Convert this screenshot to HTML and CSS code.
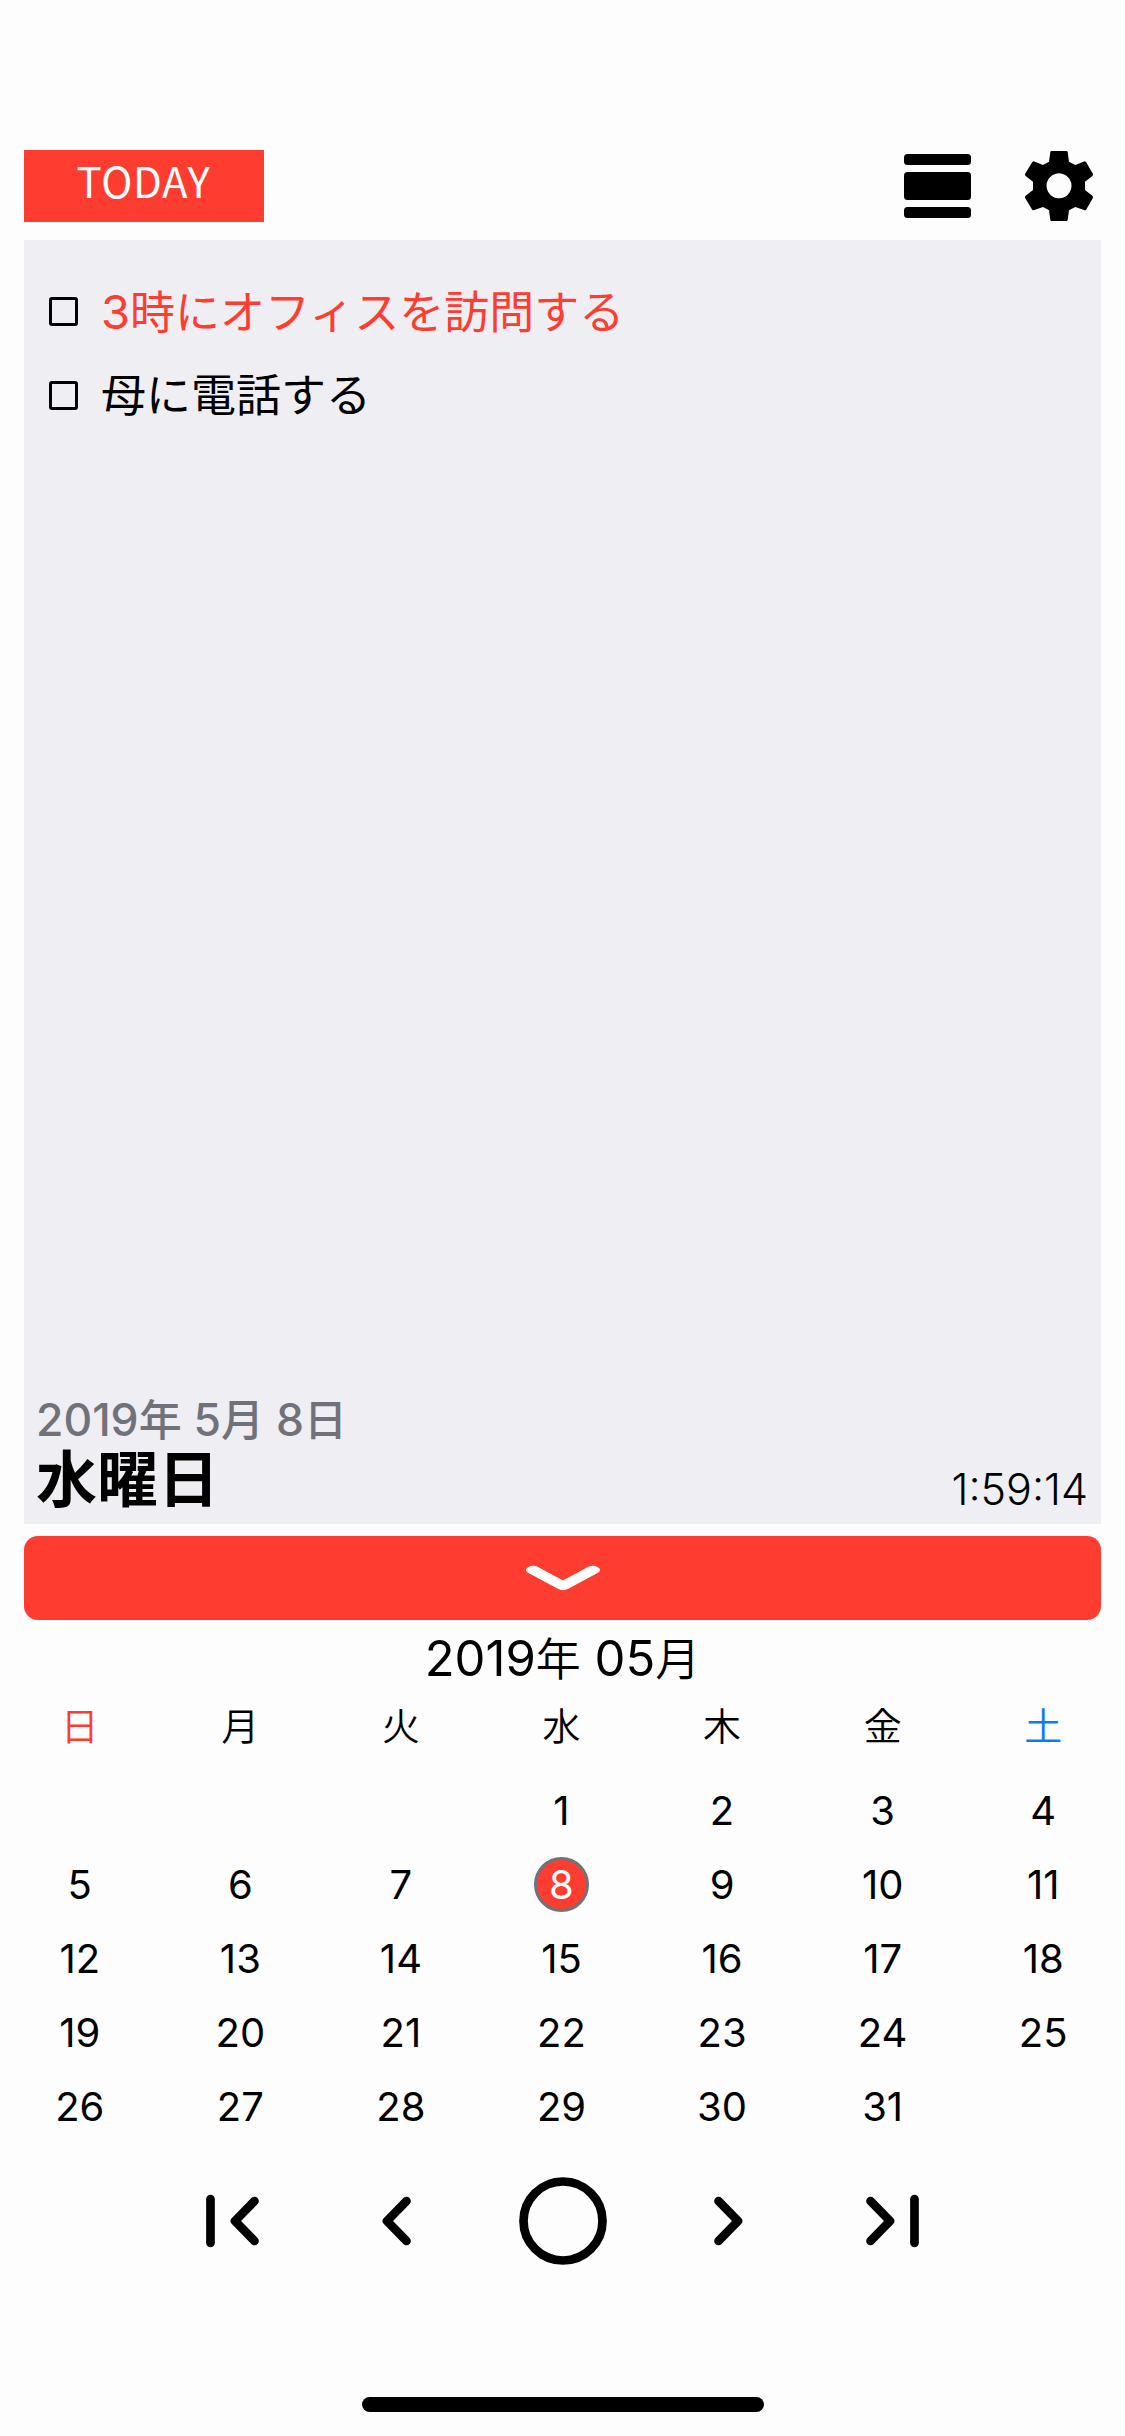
FILE: index.html
```
<!DOCTYPE html>
<html lang="ja">
<head>
<meta charset="utf-8">
<title>カレンダー</title>
<link rel="stylesheet" href="styles.css">
</head>
<body>
<header class="toolbar">
  <button class="today">TODAY</button>
  <svg class="icon-list" viewBox="0 0 67 64"><rect width="67" height="11" rx="3.5"/><rect y="18" width="67" height="28" rx="3.5"/><rect y="53" width="67" height="11" rx="3.5"/></svg>
  <svg class="icon-gear" viewBox="495 63 204 210"><path fill-rule="evenodd" d="M573 63H621L623 66 627 95 646 105 674 94 678 96 699 132 698 137 675 155V180L698 198 699 203 678 240 674 241 646 231 627 241 623 270 621 273H573L571 270 567 241 549 231 521 241 517 240 495 203 496 198 519 180V155L496 137 495 132 517 96 521 94 549 105 567 95 571 66ZM597 130a37.500 37.500 0 1 0 .1 0Z"/></svg>
</header>
<main class="panel">
  <ul class="tasks">
    <li class="task task-red"><span class="box"></span><span class="label">3<span class="jp">時にオフィスを訪問する</span></span></li>
    <li class="task"><span class="box"></span><span class="label jp">母に電話する</span></li>
  </ul>
  <div class="panel-foot">
    <div>
      <div class="date">2019<span class="jp">年</span> 5<span class="jp">月</span> 8<span class="jp">日</span></div>
      <div class="weekday">水曜日</div>
    </div>
    <time class="clock">1:59:14</time>
  </div>
</main>
<button class="collapse"><svg width="76" height="26" viewBox="0 0 41 26" preserveAspectRatio="none"><path d="M4.500 5L20.500 21 36.500 5"/></svg></button>
<h1 class="month">2019<span class="jp">年</span> 05<span class="jp">月</span></h1>
<div class="week">
  <span class="sun">日</span><span>月</span><span>火</span><span>水</span><span>木</span><span>金</span><span class="sat">土</span>
</div>
<div class="days">
  <span class="first">1</span><span>2</span><span>3</span><span>4</span>
  <span>5</span><span>6</span><span>7</span><span class="selected">8</span><span>9</span><span>10</span><span>11</span>
  <span>12</span><span>13</span><span>14</span><span>15</span><span>16</span><span>17</span><span>18</span>
  <span>19</span><span>20</span><span>21</span><span>22</span><span>23</span><span>24</span><span>25</span>
  <span>26</span><span>27</span><span>28</span><span>29</span><span>30</span><span>31</span>
</div>
<nav class="pager">
  <svg width="53" height="54" viewBox="0 0 53 54"><path d="M4.500 5V49M48.500 7L29 27 48.500 47"/></svg>
  <svg width="29" height="54" viewBox="0 0 29 54"><path d="M24.500 7L5 27 24.500 47"/></svg>
  <svg class="pager-now" width="88" height="88" viewBox="0 0 88 88"><circle cx="44" cy="44" r="39.500"/></svg>
  <svg width="29" height="54" viewBox="0 0 29 54"><path d="M4.500 7L24 27 4.500 47"/></svg>
  <svg width="53" height="54" viewBox="0 0 53 54"><path d="M4.500 7L24 27 4.500 47M48.500 5V49"/></svg>
</nav>
<div class="home-bar"></div>
</body>
</html>
```
FILE: styles.css
```
* { box-sizing: border-box; margin: 0; padding: 0; }
body {
  width: 1125px;
  height: 2436px;
  padding-top: 150px;
  display: flex;
  flex-direction: column;
  background: #fdfdfe;
  color: #000;
  font-family: Inter, "Noto Sans CJK JP", sans-serif;
}
button { border: 0; background: #ff3c30; color: #fff; }
.toolbar { display: flex; align-items: flex-start; height: 90px; padding: 0 32px 0 24px; }
.today {
  width: 240px;
  height: 72px;
  padding: 0 1px 12px 0;
  font: 370 42px/60px "Noto Sans CJK JP", sans-serif;
  letter-spacing: 0.6px;
}
.icon-list { width: 67px; height: 64px; margin: 4px 54px 0 auto; }
.icon-gear { width: 68px; height: 70px; margin-top: 1px; }

.panel {
  height: 1284px;
  margin: 0 24px;
  padding: 29px 13px 9px 12px;
  display: flex;
  flex-direction: column;
  justify-content: space-between;
  background: #eeeef3;
}
.jp { line-height: 0; }
.tasks { list-style: none; }
.task {
  height: 84px;
  padding-left: 13px;
  display: flex;
  align-items: center;
  gap: 23px;
  font-size: 47px;
  line-height: 84px;
}
.task .label { padding-top: 2px; }
.task .jp { font-size: 45px; line-height: 84px; font-weight: 370; }
.task-red { color: #ff3c30; }
.box { width: 29px; height: 29px; border: 3px solid #000; border-radius: 3px; }
.panel-foot { display: flex; justify-content: space-between; align-items: flex-end; }
.date { font-size: 44.5px; font-weight: 500; line-height: 50px; color: #717279; }
.date .jp { font-size: 43px; }
.weekday { font-size: 61px; font-weight: 700; line-height: 70px; }
.clock { margin-bottom: 3px; font-size: 43px; font-weight: 300; line-height: 46px; }

.collapse {
  height: 84px;
  margin: 12px 24px 0;
  display: flex;
  align-items: center;
  justify-content: center;
  border-radius: 14px;
}
.collapse path { fill: none; stroke: #fff; stroke-width: 8; stroke-linecap: round; stroke-linejoin: round; }
.month { height: 76px; padding-top: 1px; text-align: center; font-size: 49px; font-weight: 370; line-height: 76px; }
.month .jp { font-size: 45px; font-weight: 350; }
.week, .days {
  width: 1124px;
  margin-left: -0.5px;
  display: grid;
  grid-template-columns: repeat(7, 1fr);
  justify-items: center;
  align-items: center;
}
.week { height: 60px; font-size: 38px; font-weight: 350; line-height: 60px; }
.sun { color: #ff3c30; }
.sat { color: #0a7aff; }
.days { margin-top: 18px; grid-auto-rows: 73.8px; font-size: 40px; font-weight: 370; }
.first { grid-column-start: 4; }
.selected {
  width: 55px;
  height: 55px;
  border: 3px solid #717279;
  border-radius: 50%;
  background: #ff3c30;
  color: #fff;
  line-height: 49px;
  text-align: center;
}
.pager {
  height: 88px;
  margin-top: 34px;
  display: flex;
  align-items: center;
  justify-content: center;
  gap: 123px;
}
.pager svg { fill: none; stroke: #000; stroke-width: 8.7; stroke-linecap: round; stroke-linejoin: round; }
.pager .pager-now { margin: 0 -15.5px; }
.home-bar { width: 402px; height: 15px; margin: auto auto 24px; border-radius: 8px; background: #000; }
```
